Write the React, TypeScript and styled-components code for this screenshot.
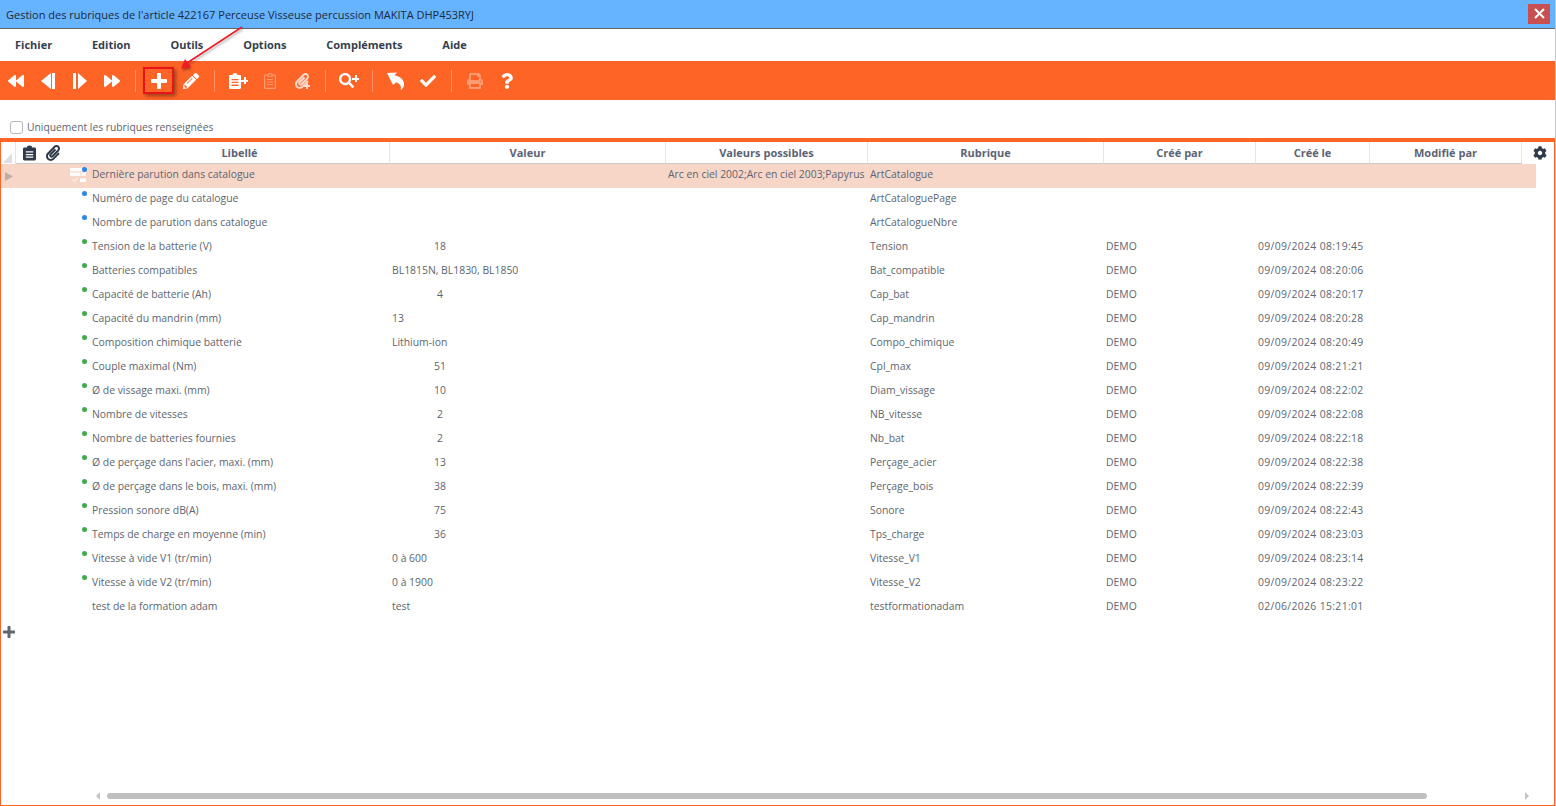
import styled, { createGlobalStyle } from "styled-components";
import {
  FaBackward,
  FaCheck,
  FaCog,
  FaForward,
  FaPaperclip,
  FaPencilAlt,
  FaPrint,
  FaQuestion,
  FaSearch,
} from "react-icons/fa";

const GlobalStyle = createGlobalStyle`
  html, body {
    margin: 0;
    height: 100%;
    overflow: hidden;
    background: #fff;
    font-family: "Open Sans", "Liberation Sans", sans-serif;
  }
  #root { height: 100%; }
`;

type Row = {
  label: string;
  value?: string;
  numeric?: boolean;
  possible?: string;
  field: string;
  by?: string;
  at?: string;
  dot?: "blue" | "green";
};

const rows: Row[] = [
  { label: "Dernière parution dans catalogue", possible: "Arc en ciel 2002;Arc en ciel 2003;Papyrus", field: "ArtCatalogue", dot: "blue" },
  { label: "Numéro de page du catalogue", field: "ArtCataloguePage", dot: "blue" },
  { label: "Nombre de parution dans catalogue", field: "ArtCatalogueNbre", dot: "blue" },
  { label: "Tension de la batterie (V)", value: "18", numeric: true, field: "Tension", by: "DEMO", at: "09/09/2024 08:19:45", dot: "green" },
  { label: "Batteries compatibles", value: "BL1815N, BL1830, BL1850", field: "Bat_compatible", by: "DEMO", at: "09/09/2024 08:20:06", dot: "green" },
  { label: "Capacité de batterie (Ah)", value: "4", numeric: true, field: "Cap_bat", by: "DEMO", at: "09/09/2024 08:20:17", dot: "green" },
  { label: "Capacité du mandrin (mm)", value: "13", field: "Cap_mandrin", by: "DEMO", at: "09/09/2024 08:20:28", dot: "green" },
  { label: "Composition chimique batterie", value: "Lithium-ion", field: "Compo_chimique", by: "DEMO", at: "09/09/2024 08:20:49", dot: "green" },
  { label: "Couple maximal (Nm)", value: "51", numeric: true, field: "Cpl_max", by: "DEMO", at: "09/09/2024 08:21:21", dot: "green" },
  { label: "Ø de vissage maxi. (mm)", value: "10", numeric: true, field: "Diam_vissage", by: "DEMO", at: "09/09/2024 08:22:02", dot: "green" },
  { label: "Nombre de vitesses", value: "2", numeric: true, field: "NB_vitesse", by: "DEMO", at: "09/09/2024 08:22:08", dot: "green" },
  { label: "Nombre de batteries fournies", value: "2", numeric: true, field: "Nb_bat", by: "DEMO", at: "09/09/2024 08:22:18", dot: "green" },
  { label: "Ø de perçage dans l'acier, maxi. (mm)", value: "13", numeric: true, field: "Perçage_acier", by: "DEMO", at: "09/09/2024 08:22:38", dot: "green" },
  { label: "Ø de perçage dans le bois, maxi. (mm)", value: "38", numeric: true, field: "Perçage_bois", by: "DEMO", at: "09/09/2024 08:22:39", dot: "green" },
  { label: "Pression sonore dB(A)", value: "75", numeric: true, field: "Sonore", by: "DEMO", at: "09/09/2024 08:22:43", dot: "green" },
  { label: "Temps de charge en moyenne (min)", value: "36", numeric: true, field: "Tps_charge", by: "DEMO", at: "09/09/2024 08:23:03", dot: "green" },
  { label: "Vitesse à vide V1 (tr/min)", value: "0 à 600", field: "Vitesse_V1", by: "DEMO", at: "09/09/2024 08:23:14", dot: "green" },
  { label: "Vitesse à vide V2 (tr/min)", value: "0 à 1900", field: "Vitesse_V2", by: "DEMO", at: "09/09/2024 08:23:22", dot: "green" },
  { label: "test de la formation adam", value: "test", field: "testformationadam", by: "DEMO", at: "02/06/2026 15:21:01" },
];

const menus = ["Fichier", "Edition", "Outils", "Options", "Compléments", "Aide"];

export default function App() {
  return (
    <Window>
      <GlobalStyle />
      <TitleBar>
        <Title>Gestion des rubriques de l'article 422167 Perceuse Visseuse percussion MAKITA DHP453RYJ</Title>
        <CloseButton aria-label="Fermer">
          <svg width="11" height="11" viewBox="0 0 11 11">
            <path d="M1 1l9 9M10 1l-9 9" stroke="#fff" strokeWidth="2" />
          </svg>
        </CloseButton>
      </TitleBar>

      <MenuBar>
        {menus.map((m) => (
          <MenuItem key={m}>{m}</MenuItem>
        ))}
      </MenuBar>

      <Toolbar>
        <Tool><FaBackward size={16} /></Tool>
        <Tool><StepIcon flip /></Tool>
        <Tool><StepIcon /></Tool>
        <Tool><FaForward size={16} /></Tool>
        <Sep />
        <Tool><PlusIcon size={16} /></Tool>
        <Tool><FaPencilAlt size={16} /></Tool>
        <Sep />
        <Tool $shift={6}><ClipboardIcon /><PlusBadge $right={6} $top={16} $size={7} /></Tool>
        <Tool $dim={0.35}><ClipboardIcon outline /></Tool>
        <Tool $dim={0.75}><FaPaperclip size={16} /><PlusBadge $right={8} $top={22} $size={6} /></Tool>
        <Sep />
        <Tool $shift={6}><FaSearch size={15} /><PlusBadge $right={6} $top={14} $size={7} /></Tool>
        <Sep />
        <Tool><UndoIcon /></Tool>
        <Tool><FaCheck size={16} /></Tool>
        <Sep />
        <Tool $dim={0.35}><FaPrint size={16} /></Tool>
        <Tool><FaQuestion size={16} /></Tool>
      </Toolbar>

      <FilterBar>
        <CheckBox />
        <FilterLabel>Uniquement les rubriques renseignées</FilterLabel>
      </FilterBar>

      <Panel>
        <HeaderRow>
          <CornerCell>
            <svg width="9" height="10" viewBox="0 0 9 10">
              <path d="M9 0v10H0z" fill="#dedede" />
            </svg>
          </CornerCell>
          <HeadIcons>
            <svg viewBox="0 0 14 16" width="13" height="16">
              <path
                fillRule="evenodd"
                fill="#2f3a4a"
                d="M1.500 2H4.200C4.400.8 5.200 0 7 0s2.600.8 2.800 2h2.700c.8 0 1.500.7 1.500 1.500v11c0 .8-.7 1.500-1.500 1.500h-11C.7 16 0 15.300 0 14.500v-11C0 2.700.7 2 1.500 2zM3 6v1.500h8V6zm0 3v1.500h8V9zm0 2.800v1.400h8v-1.400z"
              />
            </svg>
            <FaPaperclip size={16} color="#2f3a4a" />
          </HeadIcons>
          <HeaderGrid>
            <HeadCell>Libellé</HeadCell>
            <HeadCell>Valeur</HeadCell>
            <HeadCell>Valeurs possibles</HeadCell>
            <HeadCell>Rubrique</HeadCell>
            <HeadCell>Créé par</HeadCell>
            <HeadCell>Créé le</HeadCell>
            <HeadCell>Modifié par</HeadCell>
            <GearCell><FaCog size={14} color="#2f3a4a" /></GearCell>
          </HeaderGrid>
        </HeaderRow>

        <Body>
          {rows.map((r, i) => (
            <DataRow key={r.field} $active={i === 0}>
              <LeadCell>
                {i === 0 && (
                  <>
                    <RowArrow width="8" height="9" viewBox="0 0 8 9">
                      <path d="M0 0l8 4.500L0 9z" fill="#bfaea6" />
                    </RowArrow>
                    <RowKindIcon width="16" height="16" viewBox="0 0 16 16">
                      <path d="M0 0h16v3.300H0zM0 4.500h10.500v3.300H0zM11.500 4.500H16v3.300h-4.500zM10 10.500h6V14h-6z" fill="#fff" />
                      <path d="M2.500 11.500l1.800 1.800 3-3.300" stroke="#fff" fill="none" />
                    </RowKindIcon>
                  </>
                )}
                {r.dot && <Dot $kind={r.dot} />}
              </LeadCell>
              <Cell>{r.label}</Cell>
              <Cell $numeric={r.numeric}>{r.value}</Cell>
              <Cell>{r.possible}</Cell>
              <Cell>{r.field}</Cell>
              <Cell>{r.by}</Cell>
              <Cell $date>{r.at}</Cell>
              <Cell />
            </DataRow>
          ))}
          <AddRow>
            <PlusIcon size={12} color="#5f6672" />
          </AddRow>
        </Body>

        <ScrollBar>
          <svg width="4" height="8" viewBox="0 0 4 8"><path d="M4 0v8L0 4z" fill="#c4c4c4" /></svg>
          <ScrollTrack><ScrollThumb /></ScrollTrack>
          <svg width="4" height="8" viewBox="0 0 4 8"><path d="M0 0v8l4-4z" fill="#c4c4c4" /></svg>
        </ScrollBar>
      </Panel>

      <PlusHighlight />
      <Annotation width="80" height="50" viewBox="0 0 80 50">
        <path d="M72 3L17 39" stroke="#ee1c25" strokeWidth="1.500" fill="none" />
        <path d="M11 45l4-10 6 8z" fill="#ee1c25" />
      </Annotation>
    </Window>
  );
}

function PlusIcon({ size, color = "#fff" }: { size: number; color?: string }) {
  return (
    <svg width={size} height={size} viewBox="0 0 16 16">
      <path
        fill={color}
        d="M7 0h2a1 1 0 0 1 1 1v5h5a1 1 0 0 1 1 1v2a1 1 0 0 1-1 1h-5v5a1 1 0 0 1-1 1H7a1 1 0 0 1-1-1v-5H1a1 1 0 0 1-1-1V7a1 1 0 0 1 1-1h5V1a1 1 0 0 1 1-1z"
      />
    </svg>
  );
}

function StepIcon({ flip }: { flip?: boolean }) {
  return (
    <svg width="16" height="16" viewBox="0 0 16 16">
      <path fill="#fff" d={flip ? "M11 0v16L1 8zM12 0h3v16h-3z" : "M6 0v16l9-8zM1 0h3v16H1z"} />
    </svg>
  );
}

function ClipboardIcon({ outline }: { outline?: boolean }) {
  if (outline) {
    return (
      <svg width="12" height="16" viewBox="0 0 12 16">
        <path
          fill="none"
          stroke="#fff"
          strokeWidth="1.200"
          d="M4 2H1.500C1 2 .6 2.400.6 3v11.400c0 .6.4 1 .9 1h9c.5 0 .9-.4.9-1V3c0-.6-.4-1-.9-1H8M4 1.800C4 1 4.800.6 6 .6s2 .4 2 1.200V3.500H4zM3 6.500h6M3 9h6M3 11.500h6"
        />
      </svg>
    );
  }
  return (
    <svg width="12" height="16" viewBox="0 0 12 16">
      <path
        fillRule="evenodd"
        fill="#fff"
        d="M1.200 2H3.500C3.700.8 4.500 0 6 0s2.300.8 2.500 2h2.300c.7 0 1.200.5 1.200 1.200v11.600c0 .7-.5 1.200-1.200 1.200H1.200C.5 16 0 15.500 0 14.800V3.200C0 2.500.5 2 1.200 2zM2.500 6v1.300h7V6zm0 2.800v1.300h7V8.800zm0 2.800v1.300h7v-1.300z"
      />
    </svg>
  );
}

function UndoIcon() {
  return (
    <svg width="18" height="18" viewBox="0 0 18 18">
      <path
        fill="#fff"
        d="M0 1l10-.5L7.500 3.200c5 1 9.500 4.300 9.500 9 0 2.500-1 4.300-3.200 5.800-.2-.1-.2-.2-.1-.3.8-2.800-.2-6-4.400-7.500L6 13z"
      />
    </svg>
  );
}

const Window = styled.div`
  position: relative;
  display: flex;
  flex-direction: column;
  height: 100%;
  width: 1555px;
  border-right: 1px solid #c8c8c8;
`;

const TitleBar = styled.div`
  display: flex;
  align-items: center;
  justify-content: space-between;
  height: 28px;
  padding: 0 5px 0 6px;
  background: #66b3ff;
  border-bottom: 1px solid #60666c;
`;

const Title = styled.span`
  font-size: 11px;
  color: #1c2a38;
`;

const CloseButton = styled.button`
  display: flex;
  align-items: center;
  justify-content: center;
  width: 22px;
  height: 20px;
  margin-top: -1px;
  padding: 0;
  border: none;
  background: #c85050;
`;

const MenuBar = styled.nav`
  display: flex;
  align-items: center;
  gap: 39.800px;
  height: 32px;
  padding: 0 0 2px 15px;
  box-sizing: border-box;
`;

const MenuItem = styled.span`
  font-size: 11px;
  font-weight: 700;
  color: #333e4e;
`;

const Toolbar = styled.div`
  display: flex;
  align-items: center;
  height: 39px;
  background: #ff6427;
`;

const Tool = styled.div<{ $dim?: number; $shift?: number }>`
  position: relative;
  display: flex;
  align-items: center;
  justify-content: center;
  width: 32px;
  height: 39px;
  padding-right: ${(p) => p.$shift ?? 0}px;
  box-sizing: border-box;
  color: #fff;
  opacity: ${(p) => p.$dim ?? 1};
`;

const PlusBadge = styled.i<{ $right: number; $top: number; $size: number }>`
  position: absolute;
  right: ${(p) => p.$right}px;
  top: ${(p) => p.$top}px;
  width: ${(p) => p.$size}px;
  height: ${(p) => p.$size}px;
  background:
    linear-gradient(#fff, #fff) center / 100% 2px no-repeat,
    linear-gradient(#fff, #fff) center / 2px 100% no-repeat;
`;

const Sep = styled.div`
  width: 1px;
  height: 22px;
  margin: 0 7px;
  background: rgba(255, 255, 255, 0.3);
`;

const FilterBar = styled.label`
  display: flex;
  align-items: center;
  height: 38px;
  padding: 16px 0 0 10px;
  box-sizing: border-box;
`;

const CheckBox = styled.span`
  width: 11px;
  height: 11px;
  border: 1px solid #b8b8b8;
  border-radius: 3px;
`;

const FilterLabel = styled.span`
  margin-left: 4px;
  font-size: 10.300px;
  color: #5d6570;
`;

const Panel = styled.section`
  flex: 1;
  display: flex;
  flex-direction: column;
  min-height: 0;
  border: 1px solid #ff6427;
  border-top-width: 4px;
`;

const HeaderRow = styled.div`
  display: flex;
  height: 22px;
`;

const CornerCell = styled.div`
  display: flex;
  align-items: flex-end;
  width: 15px;
  padding: 0 0 1px 2px;
  box-sizing: border-box;
  border-right: 1px solid #e4e4e4;
`;

const HeadIcons = styled.div`
  display: flex;
  align-items: center;
  gap: 9px;
  width: 74px;
  padding-left: 7px;
  box-sizing: border-box;
  border-bottom: 1px solid #c8c8c8;
`;

const HeaderGrid = styled.div`
  flex: 1;
  display: grid;
  grid-template-columns: 300px 276px 202px 236px 152px 114px 152px 1fr;
`;

const HeadCell = styled.div`
  display: flex;
  align-items: center;
  justify-content: center;
  font-size: 11px;
  font-weight: 700;
  color: #5c6475;
  border-right: 1px solid #e4e4e4;
  border-bottom: 1px solid #c8c8c8;
`;

const GearCell = styled.div`
  display: flex;
  align-items: center;
  justify-content: flex-end;
  padding-right: 7px;
`;

const Body = styled.div`
  flex: 1;
  min-height: 0;
`;

const DataRow = styled.div<{ $active?: boolean }>`
  display: grid;
  grid-template-columns: 90px 300px 276px 202px 236px 152px 114px 1fr;
  align-items: start;
  width: 1535px;
  height: 24px;
  background: ${(p) => (p.$active ? "#f7d6c8" : "transparent")};
`;

const LeadCell = styled.div`
  position: relative;
  height: 24px;
`;

const RowArrow = styled.svg`
  position: absolute;
  left: 4px;
  top: 8px;
`;

const RowKindIcon = styled.svg`
  position: absolute;
  left: 69px;
  top: 4px;
`;

const Dot = styled.i<{ $kind: "blue" | "green" }>`
  position: absolute;
  left: 81px;
  top: 3px;
  width: 5px;
  height: 5px;
  border-radius: 50%;
  background: ${(p) => (p.$kind === "blue" ? "#2b86ea" : "#43a94f")};
`;

const Cell = styled.div<{ $numeric?: boolean; $date?: boolean }>`
  height: 20px;
  line-height: 20px;
  padding: 0 1px;
  font-size: 10.400px;
  color: #5d6570;
  white-space: nowrap;
  overflow: hidden;
  ${(p) => (p.$numeric ? "width: 96px; text-align: center;" : "")}
  ${(p) => (p.$date ? "letter-spacing: 0.350px;" : "")}
`;

const AddRow = styled.div`
  display: flex;
  align-items: center;
  height: 24px;
  padding-left: 2px;
`;

const ScrollBar = styled.div`
  display: flex;
  align-items: center;
  height: 14px;
  padding: 0 25px 2px 95px;
  gap: 7px;
`;

const ScrollTrack = styled.div`
  flex: 1;
  padding-right: 91px;
`;

const ScrollThumb = styled.div`
  height: 6px;
  border-radius: 3px;
  background: #c0c0c0;
`;

const PlusHighlight = styled.div`
  position: absolute;
  left: 143px;
  top: 67px;
  width: 27px;
  height: 23px;
  border: 2px solid #e8141c;
  box-shadow: 2px 2px 4px rgba(0, 0, 0, 0.4);
`;

const Annotation = styled.svg`
  position: absolute;
  left: 170px;
  top: 24px;
  filter: drop-shadow(1px 2px 1px rgba(0, 0, 0, 0.3));
`;
